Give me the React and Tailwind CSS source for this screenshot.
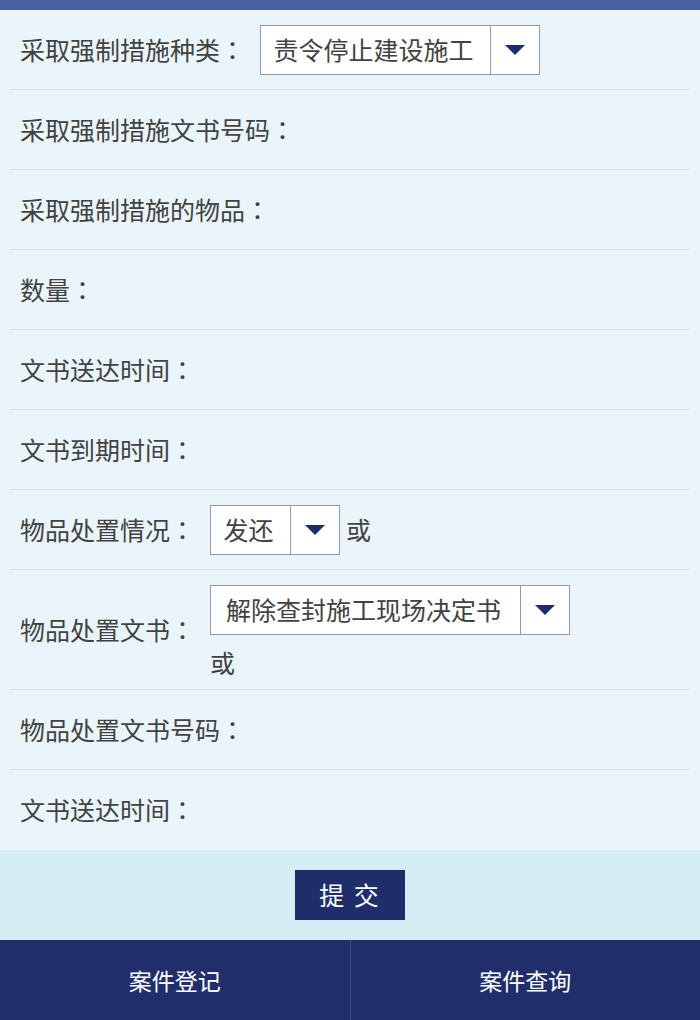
const font = { fontFamily: '"Noto Sans CJK SC", "Noto Sans", sans-serif' };
const colonFont = { fontFamily: '"Noto Sans CJK TC", "Noto Sans CJK SC", sans-serif' };

function Arrow() {
  return (
    <svg width="20" height="10" viewBox="0 0 20 10">
      <polygon points="0,0 20,0 10,10" fill="#1f2d6b" />
    </svg>
  );
}

function Select({ value, width }) {
  return (
    <div className={`flex h-[50px] border border-[#8e98b6] bg-white ${width}`}>
      <div className="flex-1 flex items-center justify-center pr-[4px] text-[25px] text-[#424242]">{value}</div>
      <div className="w-[49px] border-l border-[#8e98b6] flex items-center justify-center">
        <Arrow />
      </div>
    </div>
  );
}

function Label({ text }) {
  return (
    <span className="text-[25px] text-[#424242] whitespace-nowrap">
      {text}
      <span style={colonFont}>：</span>
    </span>
  );
}

function Row({ label, children, last }) {
  return (
    <div className={`flex items-center h-[80px] px-[10px] ${last ? "" : "border-b border-[#d6e4ec]"}`}>
      <Label text={label} />
      {children && <div className="ml-[15px] flex items-center">{children}</div>}
    </div>
  );
}

export default function App() {
  return (
    <div style={font} className="w-[700px] min-h-[1020px] bg-[#e9f5fa] flex flex-col">
      <div className="h-[10px] bg-[#4a62a0]" />

      <div className="px-[10px]">
        <Row label="采取强制措施种类">
          <Select value="责令停止建设施工" width="w-[280px]" />
        </Row>
        <Row label="采取强制措施文书号码" />
        <Row label="采取强制措施的物品" />
        <Row label="数量" />
        <Row label="文书送达时间" />
        <Row label="文书到期时间" />
        <Row label="物品处置情况">
          <Select value="发还" width="w-[130px]" />
          <span className="ml-[6px] text-[25px] text-[#424242]">或</span>
        </Row>

        {/* 物品处置文书 */}
        <div className="flex items-center h-[120px] px-[10px] border-b border-[#d6e4ec]">
          <Label text="物品处置文书" />
          <div className="ml-[15px] flex flex-col self-start pt-[15px]">
            <Select value="解除查封施工现场决定书" width="w-[360px]" />
            <div className="h-[55px] flex items-center text-[25px] text-[#424242]">或</div>
          </div>
        </div>

        <Row label="物品处置文书号码" />
        <Row label="文书送达时间" last />
      </div>

      <div className="h-[90px] bg-[#d5edf4] flex items-center justify-center">
        <button className="w-[110px] h-[50px] bg-[#1f2d6b] text-white text-[25px] tracking-[2px]">
          提 交
        </button>
      </div>

      <div className="h-[80px] bg-[#202e6c] flex">
        <div className="flex-1 flex items-center justify-center text-white text-[23px] border-r border-[#3d4c86]">
          案件登记
        </div>
        <div className="flex-1 flex items-center justify-center text-white text-[23px]">
          案件查询
        </div>
      </div>
    </div>
  );
}
